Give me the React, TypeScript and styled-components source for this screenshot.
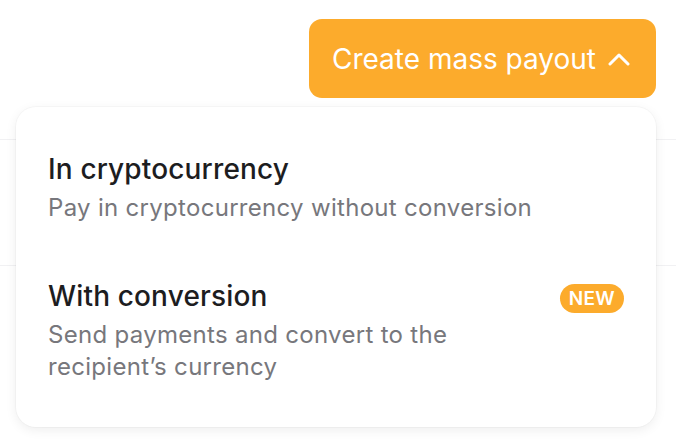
import React from 'react';
import styled, { createGlobalStyle } from 'styled-components';

const GlobalStyle = createGlobalStyle`
  html, body {
    margin: 0;
    padding: 0;
    background: #ffffff;
    font-family: 'Inter', 'Noto Sans', sans-serif;
  }
`;

const orange = '#fcab2c';

const Page = styled.div`
  width: 676px;
  height: 446px;
  overflow: hidden;
  position: relative;
`;

const Header = styled.div`
  height: 140px;
  display: flex;
  justify-content: flex-end;
  align-items: flex-start;
  padding: 19px 20px 0 0;
  box-sizing: border-box;
  border-bottom: 1px solid #f1f1f3;
`;

const Row = styled.div`
  height: 125px;
  border-bottom: 1px solid #f1f1f3;
`;

const DropdownAnchor = styled.div`
  position: relative;
`;

const MassButton = styled.button`
  height: 79px;
  display: flex;
  align-items: center;
  gap: 12px;
  padding: 0 26px 0 23px;
  border: none;
  border-radius: 13px;
  background: ${orange};
  color: #ffffff;
  font-family: 'Inter', sans-serif;
  font-size: 28px;
  font-weight: 400;
  cursor: pointer;
`;

const Menu = styled.div`
  position: absolute;
  top: calc(100% + 9px);
  right: 0;
  width: 640px;
  box-sizing: border-box;
  padding: 17px 0;
  background: #ffffff;
  border-radius: 20px;
  box-shadow: 0 0 0 1px rgba(0, 0, 0, 0.025), 0 3px 12px rgba(0, 0, 0, 0.07);
  z-index: 10;
`;

const MenuItem = styled.div`
  display: flex;
  align-items: flex-start;
  gap: 16px;
  padding: 27px 32px;
  cursor: pointer;
`;

const ItemText = styled.div`
  flex: 1;
  display: flex;
  flex-direction: column;
`;

const ItemTitle = styled.span`
  font-size: 28px;
  line-height: 36px;
  font-weight: 500;
  letter-spacing: 0.15px;
  color: #1d1d1f;
`;

const ItemDesc = styled.span`
  margin-top: 5px;
  font-size: 24px;
  line-height: 32px;
  font-weight: 400;
  color: #77777c;
  letter-spacing: 0.3px;
`;

const Badge = styled.span`
  margin-top: 6px;
  height: 29px;
  padding: 0 9px;
  display: flex;
  align-items: center;
  border-radius: 15px;
  background: ${orange};
  color: #ffffff;
  font-size: 19px;
  font-weight: 600;
  letter-spacing: 0.3px;
`;

function ChevronUp() {
  return (
    <svg width="22" height="14" viewBox="0 0 22 14" fill="none">
      <polyline points="2,12 11,3 20,12" stroke="#ffffff" strokeWidth="3" strokeLinecap="round" strokeLinejoin="round" />
    </svg>
  );
}

export default function App() {
  return (
    <Page>
      <GlobalStyle />
      <Header>
        <DropdownAnchor>
          <MassButton>
            Create mass payout
            <ChevronUp />
          </MassButton>
          <Menu>
            <MenuItem>
              <ItemText>
                <ItemTitle>In cryptocurrency</ItemTitle>
                <ItemDesc>Pay in cryptocurrency without conversion</ItemDesc>
              </ItemText>
            </MenuItem>
            <MenuItem>
              <ItemText>
                <ItemTitle>With conversion</ItemTitle>
                <ItemDesc>Send payments and convert to the recipient’s currency</ItemDesc>
              </ItemText>
              <Badge>NEW</Badge>
            </MenuItem>
          </Menu>
        </DropdownAnchor>
      </Header>
      <Row />
    </Page>
  );
}
